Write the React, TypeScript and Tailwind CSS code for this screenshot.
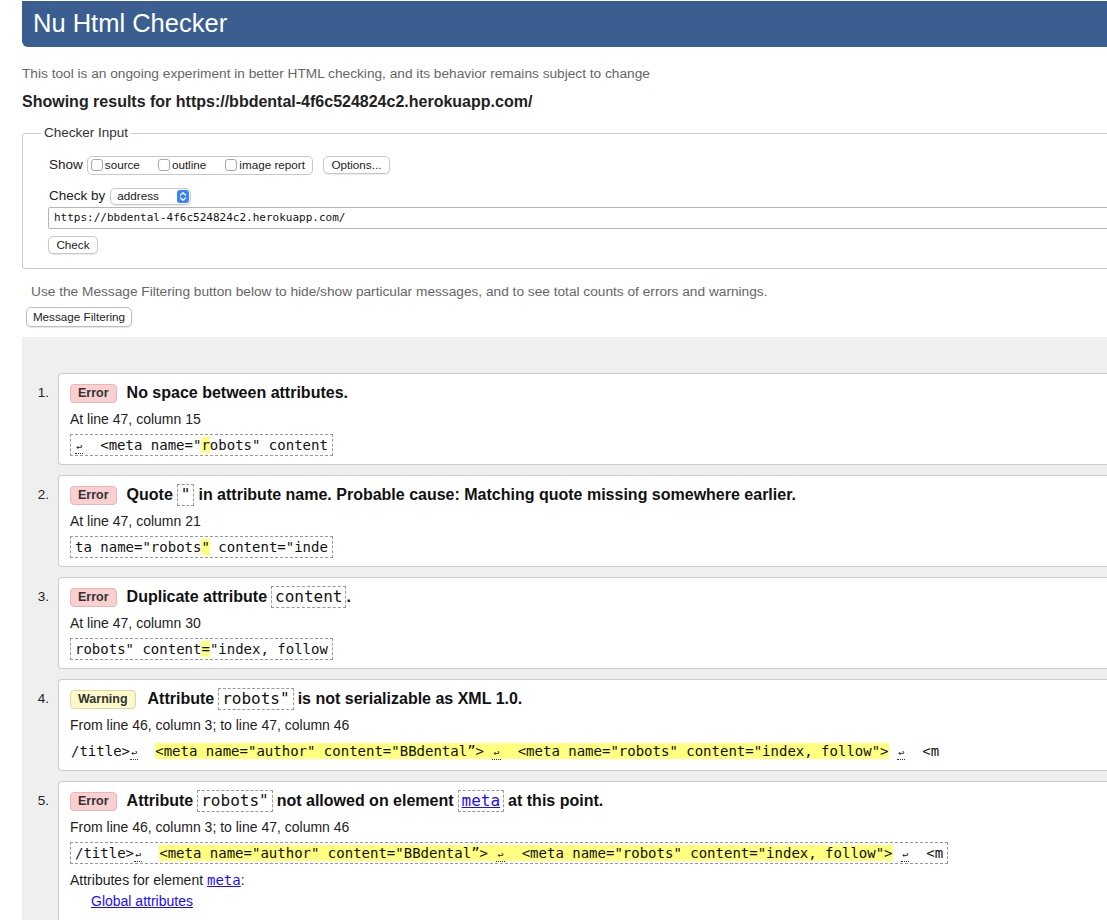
import React from "react";

const mono = "font-['DejaVu_Sans_Mono','Liberation_Mono',monospace]";

const Nl = () => (
    <span className="inline-block w-[8.4px] text-center text-[10px] leading-[12px] border-b border-dotted border-[#333]">
        ↩
    </span>
);

const Hl = ({ children }: { children: React.ReactNode }) => (
    <span className="bg-[#ffff80]">{children}</span>
);

const Code = ({ children }: { children: React.ReactNode }) => (
    <span
        className={`${mono} inline-block mx-[4px] border border-dashed border-[#999] px-[3px] text-[16px] leading-[18px] font-normal py-[1px]`}
    >
        {children}
    </span>
);

const Extract = ({
    children,
    bordered = true,
}: {
    children: React.ReactNode;
    bordered?: boolean;
}) => (
    <div className="mt-[7px] flex">
        <div
            className={
                bordered
                    ? `${mono} flex h-[22px] items-center border border-dashed border-[#999] px-[4px] text-[14px] text-[#111]`
                    : `${mono} flex h-[22px] items-center pl-[1px] text-[14px] text-[#111]`
            }
        >
            <span className="whitespace-pre">{children}</span>
        </div>
    </div>
);

const Badge = ({ kind }: { kind: "error" | "warning" }) =>
    kind === "error" ? (
        <span className="inline-flex h-[19px] items-center rounded-[4px] border border-[#e9b6b6] bg-[#f9cfcf] px-[7px] text-[12.5px] font-bold text-[#333]">
            Error
        </span>
    ) : (
        <span className="inline-flex h-[19px] items-center rounded-[4px] border border-[#dcd79f] bg-[#fbf8c9] px-[7px] text-[12.5px] font-bold text-[#333]">
            Warning
        </span>
    );

type Item = {
    kind: "error" | "warning";
    title: React.ReactNode;
    location: string;
    extract: React.ReactNode;
    bordered?: boolean;
    extra?: React.ReactNode;
};

const metaExtract = (
    <>
        {"/title>"}
        <Nl />
        {"  "}
        <Hl>
            {"<meta name=\"author\" content=\"BBdental”> "}
            <Nl />
            {"  <meta name=\"robots\" content=\"index, follow\">"}
        </Hl>
        {" "}
        <Nl />
        {"  <m"}
    </>
);

const items: Item[] = [
    {
        kind: "error",
        title: <>No space between attributes.</>,
        location: "At line 47, column 15",
        extract: (
            <>
                <Nl />
                {"  <meta name=\""}
                <Hl>r</Hl>
                {"obots\" content"}
            </>
        ),
    },
    {
        kind: "error",
        title: (
            <>
                Quote<Code>"</Code>in attribute name. Probable cause: Matching
                quote missing somewhere earlier.
            </>
        ),
        location: "At line 47, column 21",
        extract: (
            <>
                {"ta name=\"robots"}
                <Hl>"</Hl>
                {" content=\"inde"}
            </>
        ),
    },
    {
        kind: "error",
        title: (
            <>
                Duplicate attribute<Code>content</Code>
                <span className="-ml-[4px]">.</span>
            </>
        ),
        location: "At line 47, column 30",
        extract: (
            <>
                {"robots\" content"}
                <Hl>=</Hl>
                {"\"index, follow"}
            </>
        ),
    },
    {
        kind: "warning",
        title: (
            <>
                Attribute<Code>robots"</Code>is not serializable as XML 1.0.
            </>
        ),
        location: "From line 46, column 3; to line 47, column 46",
        bordered: false,
        extract: metaExtract,
    },
    {
        kind: "error",
        title: (
            <>
                Attribute<Code>robots"</Code>not allowed on element
                <Code>
                    <a className="text-[#1a0dff] underline" href="#">
                        meta
                    </a>
                </Code>
                at this point.
            </>
        ),
        location: "From line 46, column 3; to line 47, column 46",
        extract: metaExtract,
        extra: (
            <>
                <div className="mt-[8px] text-[14px] leading-[16px]">
                    Attributes for element{" "}
                    <a
                        className={`${mono} text-[14px] text-[#1a0dff] underline`}
                        href="#"
                    >
                        meta
                    </a>
                    :
                </div>
                <div className="mt-[5px] pl-[21px] text-[14px] leading-[16px]">
                    <a className="text-[#1a0dff] underline" href="#">
                        Global attributes
                    </a>
                </div>
                <div className="h-[30px]" />
            </>
        ),
    },
];

const Checkbox = () => (
    <span className="inline-block h-[12px] w-[12px] rounded-[3px] border border-[#a9a9a9] bg-white" />
);

const App = () => {
    return (
        <div className="h-[920px] w-[1107px] overflow-hidden bg-white font-['Liberation_Sans',Arial,sans-serif] text-[#222]">
            <div className="w-[1140px] pl-[22px]">
                <div className="mt-[1px] flex h-[46px] items-center rounded-b-[6px] bg-[#3b5e91] pl-[11px]">
                    <h1 className="text-[25.5px] leading-none text-white">
                        Nu Html Checker
                    </h1>
                </div>

                <p className="mt-[19px] text-[13.7px] leading-[16px] text-[#666]">
                    This tool is an ongoing experiment in better HTML checking,
                    and its behavior remains subject to change
                </p>
                <h2 className="mt-[10px] text-[16px] font-bold leading-[20px] text-[#222]">
                    Showing results for
                    https://bbdental-4f6c524824c2.herokuapp.com/
                </h2>

                <fieldset className="mt-[13px] rounded-[3px] border border-[#cccccc] pb-[14px] pl-[26px]">
                    <legend className="-ml-[8px] px-[3px] text-[13.5px] leading-[16px] text-[#333]">
                        Checker Input
                    </legend>
                    <div className="mt-[15px] flex h-[18px] items-center">
                        <span className="text-[13.5px]">Show</span>
                        <div className="ml-[4px] flex h-[19px] items-center rounded-[5px] border border-[#c8c8c8] pl-[3px] pr-[7px] text-[11.7px]">
                            <Checkbox />
                            <span className="ml-[2px]">source</span>
                            <span className="ml-[18px]" />
                            <Checkbox />
                            <span className="ml-[2px]">outline</span>
                            <span className="ml-[19px]" />
                            <Checkbox />
                            <span className="ml-[2px]">image report</span>
                        </div>
                        <button className="ml-[10px] flex h-[18px] w-[67px] items-center justify-center rounded-[5px] border border-[#c8c8c8] bg-white text-[11.7px] shadow-[0_1px_1px_rgba(0,0,0,0.08)]">
                            Options...
                        </button>
                    </div>
                    <div className="mt-[13px] flex h-[18px] items-center">
                        <span className="text-[13.5px]">Check by</span>
                        <div className="ml-[5px] flex h-[17px] w-[81px] items-center justify-between rounded-[5px] border border-[#c8c8c8] bg-white pl-[6px] pr-[1px] text-[11.7px] shadow-[0_1px_1px_rgba(0,0,0,0.08)]">
                            <span>address</span>
                            <svg width="12" height="13" viewBox="0 0 12 13">
                                <rect width="12" height="13" rx="3" fill="#3a82f7" />
                                <path
                                    d="M3.5 5 L6 2.8 L8.5 5 M3.5 8 L6 10.2 L8.5 8"
                                    stroke="white"
                                    strokeWidth="1.3"
                                    fill="none"
                                    strokeLinecap="round"
                                    strokeLinejoin="round"
                                />
                            </svg>
                        </div>
                    </div>
                    <div
                        className={`${mono} -ml-[1px] mt-[2px] flex h-[22px] items-center rounded-[2px] border border-[#b5b5b5] pl-[5px] text-[11px] text-[#111]`}
                    >
                        https://bbdental-4f6c524824c2.herokuapp.com/
                    </div>
                    <button className="-ml-[1px] mt-[7px] flex h-[18px] w-[50px] items-center justify-center rounded-[5px] border border-[#c8c8c8] bg-white text-[11.7px] shadow-[0_1px_1px_rgba(0,0,0,0.08)]">
                        Check
                    </button>
                </fieldset>

                <p className="mt-[15px] pl-[9px] text-[13.7px] leading-[16px] text-[#666]">
                    Use the Message Filtering button below to hide/show
                    particular messages, and to see total counts of errors
                    and warnings.
                </p>
                <button className="ml-[4px] mt-[7px] flex h-[20px] w-[106px] items-center justify-center rounded-[5px] border border-[#bdbdbd] bg-white text-[11.7px] shadow-[0_1px_1px_rgba(0,0,0,0.1)]">
                    Message Filtering
                </button>

                <div className="mt-[10px] bg-[#efefef] pb-[40px] pt-[36px]">
                    <ol className="flex flex-col gap-[10px]">
                        {items.map((item, i) => (
                            <li key={i} className="flex">
                                <div className="w-[36px] shrink-0 pr-[9px] pt-[9px] text-right text-[13.5px] leading-[22px]">
                                    {i + 1}.
                                </div>
                                <div className="flex-1 rounded-l-[4px] border border-r-0 border-[#cccccc] bg-white pb-[8px] pl-[11px] pt-[8px]">
                                    <div className="flex h-[22px] items-center">
                                        <Badge kind={item.kind} />
                                        <span
                                            className={
                                                item.kind === "warning"
                                                    ? "ml-[12px] whitespace-nowrap text-[16px] font-bold leading-[22px] text-[#111]"
                                                    : "ml-[10px] whitespace-nowrap text-[16px] font-bold leading-[22px] text-[#111]"
                                            }
                                        >
                                            {item.title}
                                        </span>
                                    </div>
                                    <div className="mt-[7px] text-[14px] leading-[16px]">
                                        {item.location}
                                    </div>
                                    <Extract bordered={item.bordered !== false}>
                                        {item.extract}
                                    </Extract>
                                    {item.extra}
                                </div>
                            </li>
                        ))}
                    </ol>
                </div>
            </div>
        </div>
    );
};

export default App;
